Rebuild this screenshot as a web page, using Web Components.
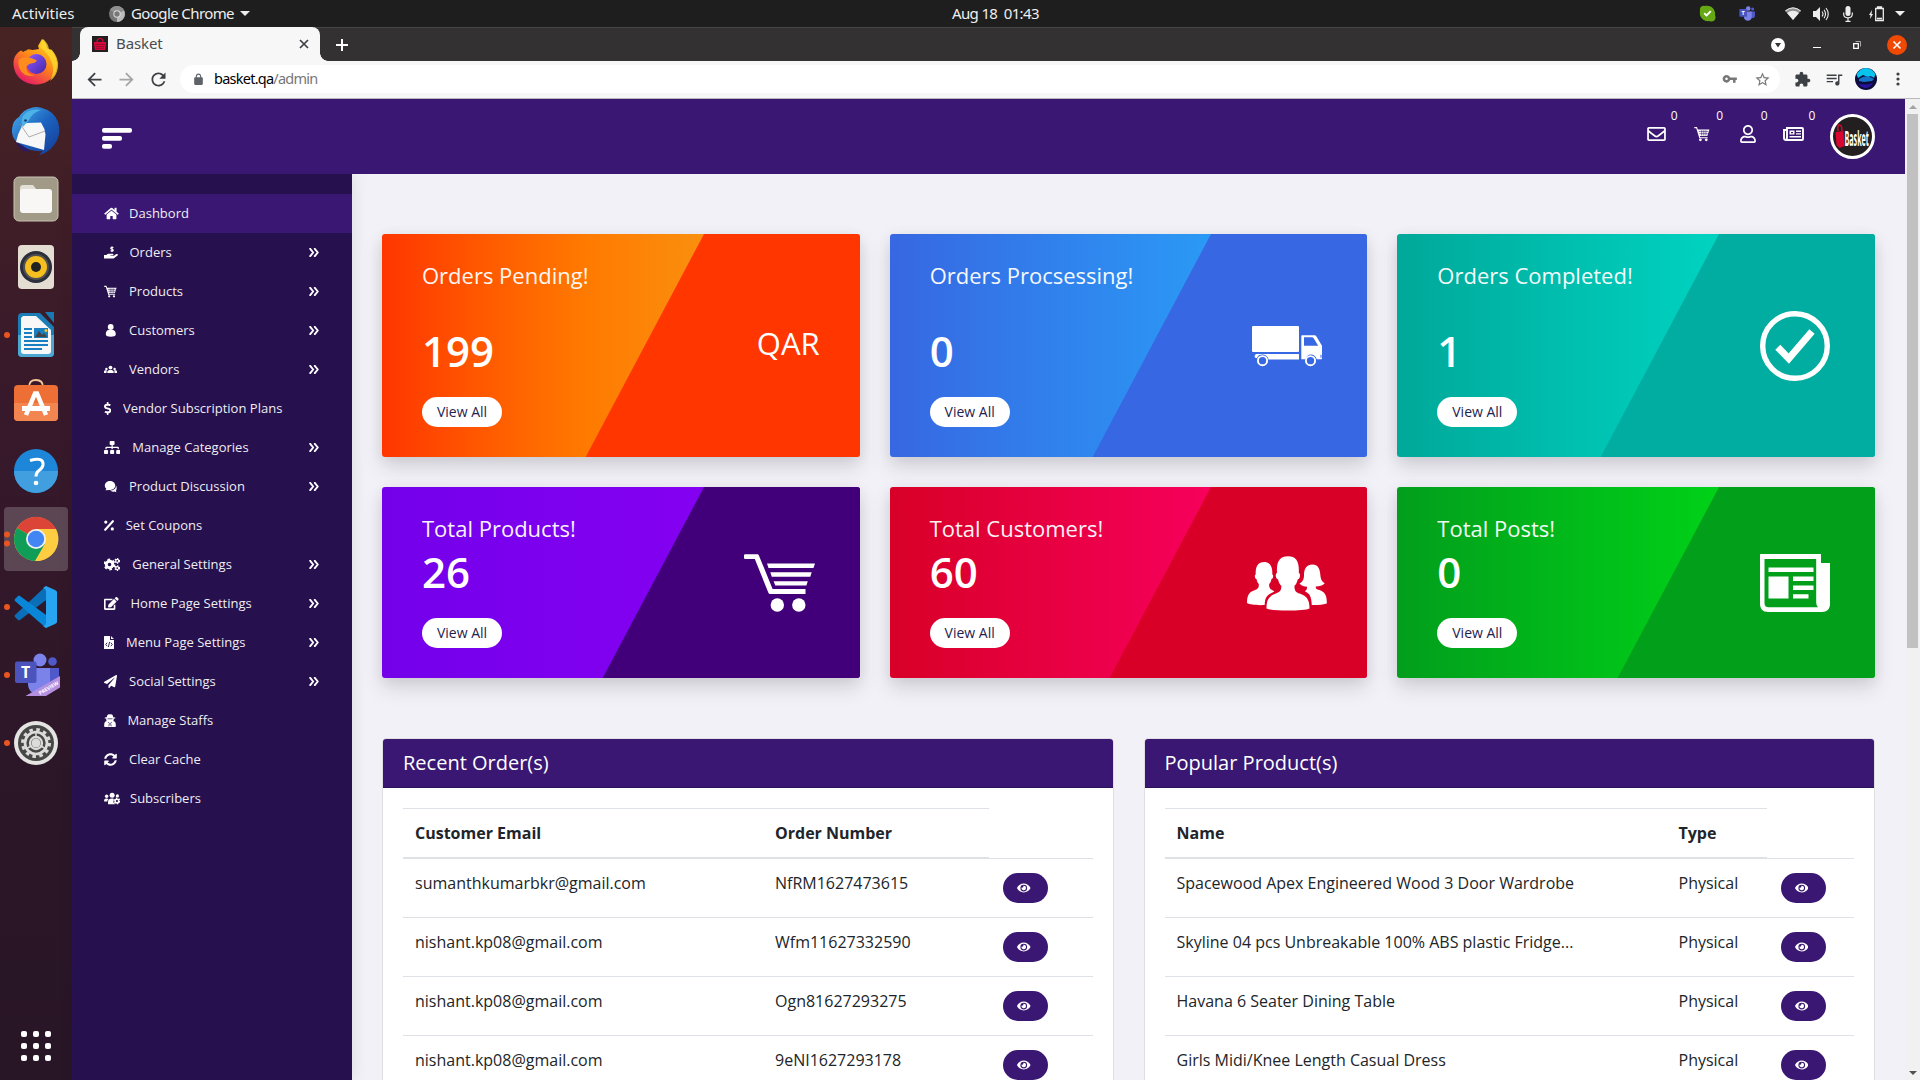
<!DOCTYPE html>
<html lang="en">
<head>
<meta charset="utf-8">
<title>Basket</title>
<style>
html,body{margin:0;height:100%;overflow:hidden}
body{font-family:"Open Sans","Noto Sans",sans-serif;background:#1e1e1e}
</style>
</head>
<body>
<desk-shell>
  <top-bar slot="top"></top-bar>
  <app-dock slot="dock"></app-dock>
  <tab-strip slot="window">Basket</tab-strip>
  <browser-toolbar slot="window" host="basket.qa" path="/admin"></browser-toolbar>
  <admin-page slot="window">
    <site-header slot="header"></site-header>
    <side-nav slot="nav">
      <nav-item icon="home" gap="25" iw="15" active>Dashbord</nav-item>
      <nav-item icon="hand" gap="25.5" iw="14" more>Orders</nav-item>
      <nav-item icon="cartSmall" gap="25" iw="13" more>Products</nav-item>
      <nav-item icon="person" gap="25" iw="13" more>Customers</nav-item>
      <nav-item icon="group" gap="25" iw="13" more>Vendors</nav-item>
      <nav-item icon="dollar" gap="19" iw="7.3">Vendor Subscription Plans</nav-item>
      <nav-item icon="sitemap" gap="28.3" iw="16.25" more>Manage Categories</nav-item>
      <nav-item icon="bubble" gap="25" iw="13" more>Product Discussion</nav-item>
      <nav-item icon="percent" gap="21.7" iw="10">Set Coupons</nav-item>
      <nav-item icon="gears" gap="28.3" iw="16.25" more>General Settings</nav-item>
      <nav-item icon="edit" gap="26.5" iw="14.6" more>Home Page Settings</nav-item>
      <nav-item icon="fileCode" gap="22" iw="10" more>Menu Page Settings</nav-item>
      <nav-item icon="plane" gap="25" iw="13" more>Social Settings</nav-item>
      <nav-item icon="spy" gap="23.4" iw="12">Manage Staffs</nav-item>
      <nav-item icon="sync" gap="25" iw="13">Clear Cache</nav-item>
      <nav-item icon="usersCog" gap="26" iw="16.25">Subscribers</nav-item>
    </side-nav>
    <stat-card slot="stats" heading="Orders Pending!" value="199" tall c="#ff3600" g="#ff3600,#ff5700 95px,#ff7a00 204px,#fa8f0e 322px"><span>QAR</span></stat-card>
    <stat-card slot="stats" heading="Orders Procsessing!" value="0" tall c="#3767e2" g="#3767e2,#2a9bf6 330px" icon="truck"></stat-card>
    <stat-card slot="stats" heading="Orders Completed!" value="1" tall c="#00ada0" g="#00a899,#00d4c2 330px" icon="check"></stat-card>
    <stat-card slot="stats" heading="Total Products!" value="26" c="#410079" g="#7400ea,#8500f2 330px" icon="cart"></stat-card>
    <stat-card slot="stats" heading="Total Customers!" value="60" c="#d90027" g="#d80027,#f8005e 330px" icon="people"></stat-card>
    <stat-card slot="stats" heading="Total Posts!" value="0" c="#029f1b" g="#029e1c,#00d318 330px" icon="news"></stat-card>
    <data-panel slot="panels" heading="Recent Order(s)" cols="360px 226px 1fr" h1="Customer Email" h2="Order Number">
      <data-row c1="sumanthkumarbkr@gmail.com" c2="NfRM1627473615"></data-row>
      <data-row c1="nishant.kp08@gmail.com" c2="Wfm11627332590"></data-row>
      <data-row c1="nishant.kp08@gmail.com" c2="Ogn81627293275"></data-row>
      <data-row c1="nishant.kp08@gmail.com" c2="9eNI1627293178"></data-row>
    </data-panel>
    <data-panel slot="panels" heading="Popular Product(s)" cols="502px 100px 1fr" h1="Name" h2="Type">
      <data-row c1="Spacewood Apex Engineered Wood 3 Door Wardrobe" c2="Physical"></data-row>
      <data-row c1="Skyline 04 pcs Unbreakable 100% ABS plastic Fridge..." c2="Physical"></data-row>
      <data-row c1="Havana 6 Seater Dining Table" c2="Physical"></data-row>
      <data-row c1="Girls Midi/Knee Length Casual Dress" c2="Physical"></data-row>
    </data-panel>
  </admin-page>
</desk-shell>
<script>
const def = (name, css, html) => customElements.define(name, class extends HTMLElement {
  connectedCallback() {
    if (this.shadowRoot) return;
    const root = this.attachShadow({ mode: 'open' });
    root.innerHTML = `<style>:host,*{box-sizing:border-box}svg{display:block;flex:none}${css}</style>` + (typeof html === 'function' ? html(this) : html);
  }
});
const svg = (w, h, vb, body, extra = '') => `<svg width="${w}" height="${h}" viewBox="${vb}" fill="currentColor" ${extra}>${body}</svg>`;
const p = d => `<path d="${d}"/>`;
const gear = (cx, cy, r, s, n, hole) => {
  const c = 2 * Math.PI * r, u = c / (n * 2);
  return `<g fill="none" stroke="currentColor"><circle cx="${cx}" cy="${cy}" r="${r}" stroke-width="${s}" stroke-dasharray="${u} ${u}"/><circle cx="${cx}" cy="${cy}" r="${(r + hole) / 2}" stroke-width="${r - hole}"/></g>`;
};

/* name: [viewBox, markup] */
const I = {
  home: ['0 0 576 512', p('M280.37 148.26L96 300.11V464a16 16 0 0 0 16 16l112.06-.29a16 16 0 0 0 15.92-16V368a16 16 0 0 1 16-16h64a16 16 0 0 1 16 16v95.64a16 16 0 0 0 16 16.05L464 480a16 16 0 0 0 16-16V300L295.67 148.26a12.19 12.19 0 0 0-15.3 0zM571.6 251.47L488 182.56V44.05a12 12 0 0 0-12-12h-56a12 12 0 0 0-12 12v72.61L318.47 43a48 48 0 0 0-61 0L4.34 251.47a12 12 0 0 0-1.6 16.9l25.5 31A12 12 0 0 0 45.15 301l235.22-193.74a12.19 12.19 0 0 1 15.3 0L530.9 301a12 12 0 0 0 16.9-1.6l25.5-31a12 12 0 0 0-1.7-16.93z')],
  hand: ['0 0 14 13', '<path d="M0 9h2.2c1-.9 2-1.200 3.200-1.200h3.200c1.200 0 1.200 1.500 0 1.500H6.500v.5h3.300l2.600-1.700c1.100-.7 2.100.5 1.200 1.300l-3.300 2.600c-.5.400-1 .500-1.600.500H0z"/><path d="M9.300 1.900C8.700.9 6.700 1 6.700 2.200c0 1.400 2.600.6 2.600 2 0 1.200-2.100 1.300-2.700.2M8 .2v5.900" fill="none" stroke="currentColor" stroke-width="1.100"/>'],
  cartSmall: ['0 0 15 15', '<path d="M.3 1h2.500l.8 2.200h10.900l-2 6.200H5.500l.4 1.200h6.900v1H5L2.100 2.200H.3z"/><circle cx="6" cy="13" r="1.300"/><circle cx="11.500" cy="13" r="1.300"/><path d="M4.500 5.100h8.900M5 7.200h8M7.200 4v5M9.200 4v5M11.200 4v5" stroke="var(--bg,#26104e)" stroke-width=".55"/>'],
  person: ['0 0 13 13', '<circle cx="6.700" cy="3" r="2.900"/><path d="M1.800 10.500c0-3 1-4.500 3-4.500h3.800c2 0 3.200 1.500 3.200 4.500 0 2.900-10 2.900-10 0z"/>'],
  group: ['0 0 13 13', '<circle cx="6.500" cy="4.600" r="1.900"/><circle cx="2.400" cy="6" r="1.200"/><circle cx="10.600" cy="6" r="1.200"/><path d="M3.300 10V8.800C3.300 6.300 9.700 6.300 9.700 8.800V10zM0 10V9c0-1.700 1.300-1.800 2.900-1.600C2.500 8 2.500 9 2.500 10zm13 0V9c0-1.700-1.300-1.800-2.900-1.600.4.600.4 1.600.4 2.600z"/>'],
  dollar: ['0 0 288 512', p('M209.2 233.4l-108-31.6C88.7 198.2 80 186.5 80 173.500c0-16.300 13.200-29.500 29.500-29.500h66.300c12.200 0 24.200 3.700 34.200 10.500 6.100 4.100 14.300 3.100 19.500-2l34.800-34c7.100-6.900 6.100-18.400-1.800-24.500C238 74.800 207.400 64.100 176 64V16c0-8.800-7.200-16-16-16h-32c-8.800 0-16 7.200-16 16v48h-2.500C45.800 64-5.400 118.700.5 183.600c4.200 46.100 39.400 83.600 83.800 96.600l102.500 30c12.500 3.700 21.200 15.300 21.200 28.300 0 16.300-13.200 29.500-29.500 29.500h-66.300C100 368 88 364.300 78 357.500c-6.100-4.100-14.300-3.100-19.500 2l-34.800 34c-7.100 6.900-6.100 18.400 1.800 24.500 24.500 19.200 55.100 29.900 86.500 30v48c0 8.800 7.200 16 16 16h32c8.800 0 16-7.200 16-16v-48.200c46.600-.9 90.300-28.600 105.700-72.700 21.500-61.600-14.600-124.800-72.500-141.700z')],
  sitemap: ['0 0 640 512', p('M128 352H32c-17.670 0-32 14.330-32 32v96c0 17.670 14.330 32 32 32h96c17.670 0 32-14.330 32-32v-96c0-17.670-14.330-32-32-32zm-24-80h192v48h48v-48h192v48h48v-57.590c0-21.170-17.230-38.410-38.410-38.410H344v-64h40c17.670 0 32-14.330 32-32V32c0-17.670-14.330-32-32-32H256c-17.670 0-32 14.330-32 32v96c0 17.670 14.330 32 32 32h40v64H94.410C73.230 224 56 241.230 56 262.410V320h48v-48zm264 80h-96c-17.670 0-32 14.330-32 32v96c0 17.670 14.330 32 32 32h96c17.670 0 32-14.330 32-32v-96c0-17.670-14.330-32-32-32zm240 0h-96c-17.670 0-32 14.330-32 32v96c0 17.670 14.330 32 32 32h96c17.670 0 32-14.330 32-32v-96c0-17.670-14.330-32-32-32z')],
  bubble: ['0 0 13 13', '<path d="M.800 5.800C.800 2.800 3.300 1 6 1S11.200 2.700 11.200 5.600c0 2.900-2.700 4.600-5.400 4.300L1.500 10.300l.8-1.600C1.300 8 .8 7 .8 5.800z"/><path d="M11.700 5c.8 3.500-1.400 5.500-5.600 5.600 1.200 1.200 3 1.300 4.200.9l2.100.8-.5-1.600c1.200-1.700 1-4.200-.2-5.700z"/>'],
  percent: ['0 0 10 12', '<circle cx="1.800" cy="2.600" r="1.600"/><circle cx="8.300" cy="9.400" r="1.600"/><path d="M8.900 1.700L1.200 10.300" stroke="currentColor" stroke-width="2.100" stroke-linecap="round"/>'],
  gears: ['0 0 16 13', gear(5.400, 6.500, 4.700, 2.400, 6, 1.800) + gear(13.100, 2.900, 2.100, 1.500, 6, .9) + gear(13.100, 10.100, 2.100, 1.500, 6, .9)],
  edit: ['0 0 576 512', p('M402.600 83.200l90.200 90.200c3.800 3.800 3.800 10 0 13.800L274.400 405.600l-92.800 10.300c-12.400 1.400-22.900-9.100-21.500-21.500l10.300-92.800L388.800 83.200c3.800-3.800 10-3.800 13.800 0zm162-22.900l-48.800-48.800c-15.200-15.200-39.900-15.200-55.200 0l-35.400 35.400c-3.800 3.800-3.800 10 0 13.800l90.200 90.200c3.800 3.800 10 3.800 13.800 0l35.400-35.400c15.200-15.300 15.200-40 0-55.200zM384 346.200V448H64V128h229.800c3.200 0 6.200-1.300 8.500-3.500l40-40c7.600-7.600 2.200-20.500-8.500-20.500H48C21.500 64 0 85.500 0 112v352c0 26.500 21.500 48 48 48h352c26.500 0 48-21.500 48-48V306.200c0-10.700-12.900-16-20.500-8.500l-40 40c-2.200 2.300-3.500 5.300-3.500 8.500z')],
  fileCode: ['0 0 10 13', '<path d="M.7 0H6v3.400c0 .3.200.6.600.6H10v8.400c0 .4-.2.600-.6.600H.7c-.5 0-.7-.2-.7-.6V.600C0 .2.200 0 .7 0zM7 0l3 3H7z"/><path d="M3.200 6.700L1.700 8.500l1.500 1.700M6.800 6.700l1.500 1.800-1.500 1.700M5.600 5.900L4.400 11" fill="none" stroke="#26104e" stroke-width=".9"/>'],
  plane: ['0 0 512 512', p('M476 3.200L12.500 270.600c-18.100 10.400-15.800 35.600 2.200 43.200L121 358.400l287.300-253.200c5.500-4.900 13.300 2.600 8.600 8.300L176 407v80.500c0 23.600 28.500 32.900 42.500 15.800L282 426l124.600 52.200c14.200 6 30.400-2.900 33-18.200l72-432C515 7.800 493.300-6.800 476 3.200z')],
  spy: ['0 0 12 13', '<path d="M3.300 1.200C4 .100 5 0 6 .5 7 0 8 .1 8.700 1.200l.6 2 1.900.4v.8H9.700c.1 1.400 0 2-.4 2.500 2 .6 2.500 1.900 2.500 3.800V12c0 .6-.4 1-1 1H1.200c-.6 0-1-.4-1-1v-1.300c0-1.900.5-3.200 2.500-3.800-.4-.5-.5-1.100-.4-2.500H.8v-.8l1.900-.4z"/><path d="M3.500 4.800h5M4.100 7.900l1.300 1.500-.6 2.900M7.900 7.900L6.600 9.400l.6 2.900" fill="none" stroke="#26104e" stroke-width=".7"/>'],
  sync: ['0 0 512 512', p('M370.720 133.280C339.458 104.008 298.888 87.962 255.848 88c-77.458.068-144.328 53.178-162.791 126.850-1.344 5.363-6.122 9.150-11.651 9.150H24.103c-7.498 0-13.194-6.807-11.807-14.176C33.933 94.924 134.813 8 256 8c66.448 0 126.791 26.136 171.315 68.685L463.030 40.970C478.149 25.851 504 36.559 504 57.941V192c0 13.255-10.745 24-24 24H345.941c-21.382 0-32.090-25.851-16.971-40.971l41.750-41.749zM32 296h134.059c21.382 0 32.090 25.851 16.971 40.971l-41.750 41.750c31.262 29.273 71.835 45.319 114.876 45.280 77.418-.070 144.315-53.144 162.787-126.849 1.344-5.363 6.122-9.150 11.651-9.150h57.304c7.498 0 13.194 6.807 11.807 14.176C478.067 417.076 377.187 504 256 504c-66.448 0-126.791-26.136-171.315-68.685L48.970 471.030C33.851 486.149 8 475.441 8 454.059V320c0-13.255 10.745-24 24-24z')],
  usersCog: ['0 0 16 13', '<circle cx="2.500" cy="4.300" r="1.700"/><circle cx="8" cy="3.200" r="2.500"/><circle cx="13.300" cy="3.900" r="1.600"/><path d="M0 9.500V8.300C0 6.300 3.200 6 4.500 7 3.500 8 3.300 8.600 3.200 9.500zM3.900 12.300V9.800c0-3.200 3.500-3.800 5.700-3l-.3 3.700 1.700 1.800z"/>' + gear(12.800, 9, 2.600, 1.700, 6, 1.100)],
  angle: ['0 0 10 9', '<path d="M1.200.8L4.200 4.500 1.200 8.200M5.800.8l3 3.700-3 3.700" fill="none" stroke="currentColor" stroke-width="1.900" stroke-linecap="round" stroke-linejoin="round"/>'],
  envelope: ['0 64 512 384', p('M464 64H48C21.490 64 0 85.490 0 112v288c0 26.510 21.490 48 48 48h416c26.510 0 48-21.490 48-48V112c0-26.510-21.490-48-48-48zm0 48v40.805c-22.422 18.259-58.168 46.651-134.587 106.490-16.841 13.247-50.201 45.072-73.413 44.701-23.208.375-56.579-31.459-73.413-44.701C106.180 199.465 70.425 171.067 48 152.805V112h416zM48 400V214.398c22.914 18.251 55.409 43.862 104.938 82.646 21.857 17.205 60.134 55.186 103.062 54.955 42.717.231 80.509-37.199 103.053-54.947 49.528-38.783 82.032-64.401 104.947-82.653V400H48z')],
  user: ['0 0 448 512', p('M313.600 304c-28.700 0-42.500 16-89.600 16-47.100 0-60.800-16-89.600-16C60.200 304 0 364.200 0 438.400V464c0 26.500 21.500 48 48 48h352c26.500 0 48-21.500 48-48v-25.600c0-74.200-60.200-134.400-134.400-134.400zM400 464H48v-25.600c0-47.600 38.800-86.400 86.400-86.400 14.600 0 38.300 16 89.600 16 51.700 0 74.900-16 89.600-16 47.600 0 86.400 38.800 86.400 86.400V464zM224 288c79.500 0 144-64.500 144-144S303.500 0 224 0 80 64.500 80 144s64.500 144 144 144zm0-240c52.900 0 96 43.100 96 96s-43.100 96-96 96-96-43.100-96-96 43.100-96 96-96z')],
  newsSmall: ['0 0 21 14', '<path d="M4 1h15c.7 0 1 .4 1 1v10c0 .7-.4 1-1 1H3c-1.300 0-2-.6-2-2V3h3zM4 3v8c0 1-.4 1.700-1.200 2" fill="none" stroke="currentColor" stroke-width="1.900"/><path fill-rule="evenodd" d="M6.500 3.500h5v4h-5zM8 5h2v1.200H8zM13 3.500h5V5h-5zM13 6.200h5v1.400h-5zM6.500 9H18v1.500H6.500z"/>'],
  eye: ['0 0 576 512', p('M572.520 241.400C518.290 135.590 410.930 64 288 64S57.680 135.640 3.480 241.410a32.350 32.350 0 0 0 0 29.190C57.710 376.410 165.070 448 288 448s230.320-71.640 284.520-177.410a32.350 32.350 0 0 0 0-29.190zM288 400a144 144 0 1 1 144-144 143.930 143.930 0 0 1-144 144zm0-240a95.310 95.310 0 0 0-25.310 3.790 47.850 47.850 0 0 1-66.900 66.900A95.780 95.780 0 1 0 288 160z')],
  truck: ['0 0 80 80', '<rect x="5" y="20" width="47" height="26" rx="1"/><path d="M10 48h42v5.500H21.500c-1-6-10-6.500-11.500-1.500-1.800.500-2.500-1-2.300-2.300C7.900 48.500 9 48 10 48z"/><path fill-rule="evenodd" d="M55 29.200h12.200c1 0 1.600.3 2.100 1.100l5.700 9.500v12.400c0 .8-.4 1-1 1h-4.200c-1.700-6.500-10-6.300-11.400 0H54.300V30c0-.6.200-.8.700-.8zM57 31.200v8.600h14.200L66.500 32c-.4-.6-.7-.8-1.300-.8zM73.500 48.700v3h1v-3z"/><g fill="none" stroke="currentColor" stroke-width="1.900"><circle cx="15.500" cy="54.700" r="4.600"/><circle cx="63.500" cy="54.700" r="4.600"/></g>'],
  check: ['0 0 80 80', '<circle cx="40" cy="40" r="32.300" fill="none" stroke="currentColor" stroke-width="5.400"/><path d="M22.800 41.200l11 11.400 23.200-27.100" fill="none" stroke="currentColor" stroke-width="7"/>'],
  cart: ['0 0 80 80', '<path d="M5.500 11.200H17c1 0 1.600.4 1.900 1.300L32.600 45.900h32.900V51H30.300c-1 0-1.500-.4-1.900-1.300L14.800 16.100H5.500c-1 0-1.500-.5-1.500-1.300v-2.300c0-.8.500-1.300 1.500-1.300z"/><path d="M27 20.500h48l-1.500 4.600H28.500zM30.300 29.200h41.400l-1.400 4.500H31.800zM33.600 38.200h34.200L66.400 42.500H35.300z"/><circle cx="37.300" cy="62" r="6.700"/><circle cx="58.800" cy="62" r="6.700"/>'],
  people: ['0 0 80 80', '<path d="M17 19c-5.700 0-8.700 4-8.300 12.500-1.400.3-1.100 4.200.8 4.500.4 2.200 1.200 3.900 2.300 5 .2 4-1.200 5-4.300 6.200C2.500 49 0 51.500 0 60c3 1.700 10.500 2.500 17.700 2 .2-7.500 2-10 8.300-12.800l1.400-.9c-4.500-2-5.500-3.500-5.200-7.300 1.200-1.100 1.900-2.800 2.300-5 1.900-.3 2.200-4.200.8-4.500C25.700 23 22.700 19 17 19zM65.500 21.500C59.500 21.500 57 26 57 32c0 4-1 6.500-4.500 8.600 1.800 2.300 5 3.200 7.500 3.200.2 2-.6 3.300-2.200 4.500 5 2.400 6.500 5 7 13.700 5.700.2 10.700-.3 15-1.500.2-8-1.800-11.500-7.500-13.400-3-1-3.700-1.500-3.500-3.500 3.500 0 7-1.200 9-3.300-3.300-1.700-4.200-4.800-4.500-8.800-.4-6-2.500-10-7.800-10z"/><path d="M41 13.200c-8 0-11.800 5-11 16.800-2 .3-1.500 6 1 6.300.7 3.200 1.900 5.200 3.300 6.500.2 4.700-1.300 6.200-5.500 7.800-6.500 2.500-9.300 5.300-9.300 14.900 4.500 2.700 38 2.700 43 0 0-9.600-3.300-12.400-9.800-14.900-4-1.600-5.400-3.100-5.200-7.800 1.500-1.300 2.600-3.300 3.300-6.500 2.500-.3 3-6 1-6.300.7-11.800-2.800-16.800-10.800-16.800z"/>'],
  news: ['0 0 80 80', '<path fill-rule="evenodd" d="M5.500 11H66v9h9V61c0 5-3 8-8 8H13.500c-6 0-8.500-3.500-8.500-8.500v-49zM9.500 16v44c0 3 1.500 4.200 4.200 4.200H63c-1.300-1.500-1.800-3-1.800-5.500V16z"/><path d="M13.500 24.500h45v4.500h-45zM13.500 33.500h20v22h-20zM38 33.500h20.500V38H38zM38 42.500h20.500V47H38zM38 51.300h15.500v4.300H38z"/>'],
  back: ['0 0 24 24', p('M20 11H7.830l5.590-5.590L12 4l-8 8 8 8 1.410-1.410L7.830 13H20v-2z')],
  fwd: ['0 0 24 24', p('M12 4l-1.410 1.410L16.170 11H4v2h12.170l-5.580 5.590L12 20l8-8z')],
  reload: ['0 0 24 24', p('M17.650 6.350C16.200 4.900 14.210 4 12 4c-4.420 0-7.990 3.580-7.990 8s3.570 8 7.990 8c3.730 0 6.840-2.550 7.730-6h-2.080c-.82 2.330-3.040 4-5.650 4-3.310 0-6-2.690-6-6s2.690-6 6-6c1.660 0 3.140.690 4.220 1.780L13 11h7V4l-2.350 2.350z')],
  lock: ['0 0 24 24', p('M18 8h-1V6c0-2.760-2.240-5-5-5S7 3.240 7 6v2H6c-1.100 0-2 .900-2 2v10c0 1.100.900 2 2 2h12c1.100 0 2-.900 2-2V10c0-1.100-.900-2-2-2zM9 6c0-1.660 1.340-3 3-3s3 1.340 3 3v2H9V6z')],
  key: ['0 0 24 24', p('M12.650 10C11.830 7.670 9.610 6 7 6c-3.310 0-6 2.690-6 6s2.690 6 6 6c2.610 0 4.830-1.670 5.650-4H17v4h4v-4h2v-4H12.650zM7 14c-1.100 0-2-.900-2-2s.900-2 2-2 2 .900 2 2-.900 2-2 2z')],
  star: ['0 0 24 24', p('M22 9.240l-7.190-.620L12 2 9.190 8.630 2 9.240l5.460 4.730L5.820 21 12 17.270 18.180 21l-1.630-7.030L22 9.240zM12 15.400l-3.760 2.270 1-4.280-3.320-2.880 4.380-.380L12 6.100l1.710 4.040 4.380.380-3.320 2.880 1 4.280L12 15.400z')],
  ext: ['0 0 24 24', p('M20.500 11H19V7c0-1.100-.900-2-2-2h-4V3.500C13 2.120 11.880 1 10.500 1S8 2.120 8 3.500V5H4c-1.100 0-1.990.900-1.990 2v3.800H3.500c1.490 0 2.700 1.210 2.700 2.700s-1.210 2.700-2.700 2.700H2V20c0 1.100.900 2 2 2h3.800v-1.500c0-1.490 1.210-2.700 2.700-2.700 1.490 0 2.700 1.210 2.700 2.700V22H17c1.100 0 2-.900 2-2v-4h1.500c1.380 0 2.500-1.120 2.500-2.500S21.880 11 20.500 11z')],
  music: ['0 0 24 24', p('M15 5H1v2h14V5zm0 4.500H1v2h14v-2zM1 14h9v2H1zM17 5v9.680c-.310-.110-.650-.180-1-.180-1.660 0-3 1.340-3 3s1.340 3 3 3 3-1.340 3-3V7h4V5h-6z')]
};
const ic = (n, w, h = w) => svg(w, h, I[n][0], I[n][1]);

def('desk-shell', `
:host{display:flex;flex-direction:column;width:1920px;height:1080px;overflow:hidden}
.main{display:flex;flex:1;min-height:0}
.win{flex:1;min-width:0;display:flex;flex-direction:column}`,
`<slot name="top"></slot><div class="main"><slot name="dock"></slot><div class="win"><slot name="window"></slot></div></div>`);

const TEAMS = '<circle cx="26" cy="8" r="6.500" fill="#7b83eb"/><circle cx="38.500" cy="9.500" r="4.300" fill="#5059c9"/><path d="M32 16h13v13c0 8-13 8-13 0z" fill="#5059c9"/><path d="M14 16h22v16c0 14-22 14-22 0z" fill="#7b83eb"/><rect x="1" y="9.500" width="21.500" height="21.500" rx="2" fill="#4b53bc"/><text x="11.700" y="26" text-anchor="middle" font-family="Open Sans" font-weight="700" font-size="16" fill="#fff">T</text>';

def('top-bar', `
:host{display:flex;align-items:center;height:27px;flex:none;background:#1e1e1e;color:#eee;font:15px/27px "Noto Sans",sans-serif;padding:0 10px 0 12px}
.l{flex:0 0 940px;display:flex;align-items:center;white-space:pre}
.a{width:97px}.g{margin:0 6px 0 6px;letter-spacing:-.6px}
.r{flex:1;display:flex;justify-content:flex-end;align-items:center}
.t{white-space:pre;letter-spacing:-.65px}`,
`<div class="l"><span class="a">Activities</span>
${svg(16, 16, '0 0 48 48', '<circle cx="24" cy="24" r="24" fill="#777"/><path d="M24 24L45 13A24 24 0 0 1 24 48z" fill="#bbb"/><path d="M24 24L3 12A24 24 0 0 1 45 13z" fill="#8f8f8f"/><circle cx="24" cy="24" r="11" fill="#ddd"/><circle cx="24" cy="24" r="8" fill="#777"/>')}<span class="g">Google Chrome</span>${svg(10, 5, '0 0 10 5', '<path d="M0 0h10L5 5z"/>')}</div>
<span class="t">Aug 18  01:43</span>
<div class="r">
${svg(17, 17, '0 0 18 18', '<path d="M1 4a4 4 0 0 1 5-3C12-.5 18 4 17 11c2 4-2 8-6 6C5 18 0 13 1 7z" fill="#66a814"/><path d="M5.500 8.700L8 11l4.500-4.500" fill="none" stroke="#fff" stroke-width="2"/>')}
<span style="margin-left:23px">${svg(17, 17, '0 0 48 44', TEAMS)}</span>
<span style="margin-left:29px">${svg(16, 13, '0 0 16 13', '<path d="M0 3.500Q8-2.500 16 3.500L8 13z" opacity=".55"/><path d="M2 6q6-4.500 12 0L8 13z"/><path d="M.3 4Q8-2.300 15.700 4" fill="none" stroke="currentColor"/>')}</span>
<span style="margin-left:12px">${svg(16, 14, '0 0 16 14', '<path d="M0 4h3l4-4v14L3 10H0z"/><path d="M9 4.500q2 2.500 0 5M11 2.700q3 4.300 0 8.600M13 1q4.500 6 0 12" fill="none" stroke="currentColor" stroke-width="1.100"/>')}</span>
<span style="margin-left:14px">${svg(10, 16, '0 0 10 16', '<rect x="2.500" y="0" width="5" height="10" rx="2.500"/><path d="M.7 6.500V8q0 3.800 4.300 3.800T9.300 8V6.500M5 12v3M2.500 15.300h5" fill="none" stroke="currentColor" stroke-width="1.200"/>')}</span>
<span style="margin-left:16px">${svg(15, 16, '0 0 15 16', '<path d="M3 4L0 9h1.500L1 13l3-5H2.500z"/><path d="M6.700 2.500h7.600v12H6.700zM8.500 1h4v1.500h-4zM8 12.500h5" fill="none" stroke="currentColor" stroke-width="1.300"/>')}</span>
<span style="margin-left:11px;margin-right:5px">${svg(10, 5, '0 0 10 5', '<path d="M0 0h10L5 5z"/>')}</span>
</div>`);

const DOCK = [
['', `<defs><linearGradient id="f1" x1=".8" y1="0" x2=".2" y2="1"><stop offset="0" stop-color="#ffe226"/><stop offset=".45" stop-color="#ff8a16"/><stop offset="1" stop-color="#e4106e"/></linearGradient><linearGradient id="f2" x1="0" y1="0" x2="1" y2="1"><stop offset="0" stop-color="#9059ff"/><stop offset="1" stop-color="#4326a8"/></linearGradient></defs><path d="M8 12l1.500-.5L11 13q3-2 5-2l-1-1q6 1 6 1l6-1-1-3 4-7q4 3 5 9l3 2 1-.5q5 6 6 13c1 13-9 22-21 22S1 37 1.500 23Q2 16 8 12z" fill="url(#f1)"/><path d="M28 8l3-8q5 4 6 10l3 1q7 8 6 17-1 9-8 14 5-9 2-18-3-9-12-16z" fill="#ffdc32" opacity=".75"/><circle cx="24.500" cy="25" r="10" fill="url(#f2)"/><path d="M7 20q8-4 17 1 2 1-2 3-5 0-8 4 1 8 9 8-9 3-14-4-4-6-2-12z" fill="#ff8c1c"/>`],
['', `<defs><linearGradient id="t1" x1="0" y1="0" x2="1" y2="1"><stop offset="0" stop-color="#4bb3ee"/><stop offset=".5" stop-color="#1c63c0"/><stop offset="1" stop-color="#143a93"/></linearGradient></defs><path d="M19 1q5-2 11 0 12 3 16 14 4 13-4 23-6 8-15 10l4-4q-12 1-21-5Q-1 33 0 22 1 13 7 10q4-7 12-9z" fill="url(#t1)"/><path d="M4 35q2 6 7 9l8 1-9-7z" fill="#2e1a63"/><path d="M10 19q2-3 6-3l13-.5q4 6 4.500 12L32 43 4 35q2-9 6-16z" fill="#f7f7f7"/><path d="M8 17l9 13 16-6" fill="none" stroke="#999" stroke-width=".8"/><path d="M11 9q6-8 18-6-9 3-12 10l-6 7q-3-5 0-11z" fill="#4cb2e8"/><circle cx="13.500" cy="13.500" r="1.300" fill="#143a73"/>`],
['', `<rect x="2" y="2" width="44" height="44" rx="5" fill="#a19a87" stroke="#c9c3b3"/><path d="M8 13q0-3 3-3h10l4 5v6H8z" fill="#e2dfd6"/><rect x="8" y="14" width="32" height="24" rx="3" fill="#f8f7f6"/>`],
['', `<rect x="6" y="2" width="36" height="44" rx="4" fill="#e4ded2"/><circle cx="24" cy="24" r="16" fill="#2b2f3c"/><circle cx="24" cy="24" r="13" fill="#505052"/><circle cx="24" cy="24" r="11" fill="#f5bf20"/><circle cx="24" cy="24" r="5" fill="#222"/>`],
['1', `<path d="M10 2h18l14 14v26q0 4-4 4H10q-4 0-4-4V6q0-4 4-4z" fill="#1a7db5"/><path d="M6 24h36v18q0 4-4 4H10q-4 0-4-4z" fill="#4ca8d3"/><path d="M33 1h9v11z" fill="#1779b4"/><path d="M11 5h13l15 14v21q0 3-3 3H12q-3 0-3-3V7z" fill="#f7f7f7"/><g fill="#1a7fc0"><path d="M12 17h8v2h-8zM12 21h8v2h-8zM12 25h8v2h-8zM12 29h24v2H12zM12 33h24v2H12zM12 37h18v2H12z"/><path d="M22 17h14v10H22z"/></g><path d="M23 26l4-6 3 4 2-2 3 4z" fill="#444"/><circle cx="34" cy="19.500" r="1.500" fill="#f9c623"/>`],
['', `<path d="M17 8q0-7 7-7t7 7" fill="none" stroke="#f5c79a" stroke-width="1.800"/><rect x="2" y="6" width="44" height="36" rx="4" fill="#ee6f36"/><path d="M2 24h44v14q0 4-4 4H6q-4 0-4-4z" fill="#f28550"/><g fill="none" stroke="#fff" stroke-width="4.500"><path d="M14 36L23 14.500h2L34 36"/><path d="M10 29.500h28" stroke-width="5"/></g>`],
['', `<circle cx="24" cy="24" r="22" fill="#1e86d8"/><path d="M2 24a22 22 0 0 0 44 0z" fill="#419fe0"/><path d="M18 13.500q14-4 13 4.500-.5 3-4 5.500-3 2-3 6" fill="none" stroke="#fff" stroke-width="3"/><circle cx="24" cy="36" r="2.300" fill="#fff"/>`],
['2', `<circle cx="24" cy="24" r="22" fill="#ffcd41"/><path d="M24 24L5 13a22 22 0 0 1 39 1H24z" fill="#db4437"/><path d="M5 13a22 22 0 0 0 18 33l10-17-9-5z" fill="#0f9d58"/><path d="M24 14h20a22 22 0 0 1-20.500 32L33 29z" fill="#ffcd41"/><circle cx="24" cy="24" r="10" fill="#f1f1f1"/><circle cx="24" cy="24" r="8.200" fill="#4285f4"/>`],
['1', `<path d="M34 3v14L8 37q-1 .5-2 0l-3-3q-1-1 0-2z" fill="#0a6fb8"/><path d="M3 16l3-3q1-1 2 0l26 19v13L3 18q-1-1 0-2z" fill="#0a86d8"/><path d="M34 3l9 4q2 1 2 2v30q0 1-2 2l-9 4-3-2q3 0 3-3V8q0-2-3-3z" fill="#27a5f2"/>`],
['1', `<g transform="translate(2 1)">${TEAMS}</g><path d="M13.500 45L48 25v11.500L34 45z" fill="#b58fe0"/><text transform="translate(28 44) rotate(-30)" font-family="Open Sans" font-weight="700" font-size="5" fill="#fff">PREVIEW</text>`],
['1', `<circle cx="24" cy="24" r="22" fill="#e4e4e2"/><circle cx="24" cy="24" r="18" fill="#474747"/><g fill="none" stroke="#dcdcda"><circle cx="24" cy="24" r="13.500" stroke-width="3" stroke-dasharray="3.530 3.530"/><circle cx="24" cy="24" r="11" stroke-width="2.700"/><circle cx="24" cy="24" r="6" stroke-width="2.300"/><path d="M24 12v6M34 30l-5-3M14 30l5-3" stroke-width="1.500"/></g><circle cx="24" cy="24" r="4.500" fill="#dcdcda"/>`]
];
def('app-dock', `
:host{display:flex;flex-direction:column;width:72px;flex:none;padding:2px 0 19px;background:linear-gradient(#482323,#38192b 35%,#2a1627 75%,#281526)}
.i{height:68px;flex:none;display:grid;place-items:center;position:relative}
.i.n2::before{content:"";position:absolute;inset:2px 4px;border-radius:4px;background:rgba(255,255,255,.2)}
.i svg{position:relative}
.d{position:absolute;left:4px;top:50%;transform:translateY(-50%);display:flex;flex-direction:column;gap:3px}
.d b{width:6px;height:6px;border-radius:3px;background:#e95420}
.grid{margin:auto auto 0;display:grid;grid-template-columns:repeat(3,6px);gap:6px;width:30px;justify-content:space-between}
.grid b{width:6px;height:6px;border-radius:2px;background:#fff}`,
DOCK.map(([n, s]) => `<div class="i n${n}">${svg(48, 48, '0 0 48 48', s)}<div class="d">${'<b></b>'.repeat(+n)}</div></div>`).join('') +
`<div class="grid">${'<b></b>'.repeat(9)}</div>`);

def('tab-strip', `
:host{display:flex;height:34px;flex:none;background:#333131;border-top:1px solid #474545;align-items:stretch;padding:0 13px 0 8px;font:15px/33px "Noto Sans",sans-serif;color:#494c50}
.tab{position:relative;width:240px;margin-top:-1px;background:#f7f7f7;border-radius:8px 8px 0 0;display:flex;align-items:center;padding:0 10px 0 12px}
.tab::before,.tab::after{content:"";position:absolute;bottom:0;width:8px;height:8px}
.tab::before{left:-8px;background:radial-gradient(circle at 0 0,transparent 7.500px,#f7f7f7 8px)}
.tab::after{right:-8px;background:radial-gradient(circle at 100% 0,transparent 7.500px,#f7f7f7 8px)}
.n{flex:1;margin-left:8px;margin-top:-1px;letter-spacing:-.1px}
.plus{margin:0 auto 0 16px;color:#fff;align-self:center}
.w{display:flex;align-items:center;color:#fff}`,
`<div class="tab">${svg(16, 16, '0 0 16 16', '<rect width="16" height="16" fill="#231f20"/><path d="M2 6h12v2l-1 6H3L2 8z" fill="#d9063a"/><path d="M5 6q0-3.500 3-3.500T11 6" fill="none" stroke="#d9063a" stroke-width="1.200"/><path d="M3 8.500h10M4 10.500h8M4 12.300h8" stroke="#6b1126" stroke-width=".6"/>')}<span class="n"><slot></slot></span>${svg(12, 12, '0 0 12 12', '<path d="M2 2l8 8M10 2l-8 8" stroke="#3c3f43" stroke-width="1.700"/>')}</div>
<span class="plus">${svg(12, 12, '0 0 12 12', '<path d="M6 0v12M0 6h12" stroke="#fff" stroke-width="2"/>')}</span>
<div class="w">${svg(14, 14, '0 0 14 14', '<circle cx="7" cy="7" r="7"/><path d="M4 5h6L7 9.500z" fill="#333"/>')}
${svg(8, 8, '0 0 8 8', '<path d="M0 6h8v1H0z"/>', 'style="margin-left:28px"')}
${svg(8, 8, '0 0 8 8', '<path d="M.7 2.700h4.600v4.600H.700z" fill="none" stroke="#fff" stroke-width="1.300"/><path d="M2.500 .5h5v5" fill="none" stroke="#aaa"/>', 'style="margin-left:32px"')}
${svg(20, 20, '0 0 20 20', '<circle cx="10" cy="10" r="10" fill="#f04903"/><path d="M6.500 6.500l7 7M13.500 6.500l-7 7" stroke="#fff" stroke-width="1.600"/>', 'style="margin-left:26px"')}</div>`);

def('browser-toolbar', `
:host{display:flex;height:38px;flex:none;background:#f7f7f7;border-bottom:1px solid #b9b9b9;align-items:center;padding:0 6px 1px;color:#3c3f43}
i{width:32px;display:grid;place-items:center}
.o{flex:1;height:28px;margin:0 6px;border-radius:14px;background:#fff;display:flex;align-items:center;padding:0 2px 0 12px;font:14.500px/27px "Noto Sans",sans-serif;color:#777}
.u{margin:-1px 0 0 9px;flex:1;letter-spacing:-.75px}.u b{font-weight:400;color:#000}`,
h => `<i>${ic('back', 21)}</i><i style="color:#a5a5a5">${ic('fwd', 21)}</i><i>${ic('reload', 21)}</i>
<div class="o"><span style="color:#5f6368">${ic('lock', 13)}</span><span class="u"><b>${h.getAttribute('host')}</b>${h.getAttribute('path')}</span><i>${ic('key', 15.500)}</i><i>${ic('star', 17)}</i></div>
<i>${ic('ext', 17)}</i><i>${ic('music', 17)}</i><i>${svg(22, 22, '0 0 22 22', '<circle cx="11" cy="11" r="11" fill="#0b0b3c"/><path d="M1.500 6.500Q5 0 11 0t9.500 6.500L19 10q-3-3-6-1L8 7 3 10z" fill="#08c4ec"/><path d="M4 11q6-4 11-2l4 2-2 2-8 1-5-1z" fill="#1476c9"/><path d="M3 15q5 3 15 0-3 5-8 5-5-1-7-5z" fill="#2a12a0"/>')}</i><i>${svg(4, 14, '0 0 4 14', '<circle cx="2" cy="2" r="1.600"/><circle cx="2" cy="7" r="1.600"/><circle cx="2" cy="12" r="1.600"/>')}</i>`);

def('admin-page', `
:host{display:flex;flex:1;min-height:0;background:#f2f1f8}
.page{flex:1;min-width:0;display:flex;flex-direction:column}
.row{display:flex;flex:1;min-height:0}
main{flex:1;min-width:0;padding:60px 30px 0;overflow:hidden}
.stats{display:grid;grid-template-columns:repeat(3,1fr);gap:30px}
.panels{display:grid;grid-template-columns:1fr 1fr;gap:30px;margin-top:60px}
.sb{width:15px;background:#f1f1f1;display:flex;flex-direction:column;align-items:center;padding:6px 0 5px}
.th{width:11px;height:534px;margin-top:5px;background:#c1c1c1}
.sb svg:last-child{margin-top:auto}`,
`<div class="page"><slot name="header"></slot><div class="row"><slot name="nav"></slot><main><div class="stats"><slot name="stats"></slot></div><div class="panels"><slot name="panels"></slot></div></main></div></div>
<div class="sb">${svg(8, 4, '0 0 8 4', '<path d="M0 4h8L4 0z" fill="#a3a3a3"/>')}<div class="th"></div>${svg(8, 4, '0 0 8 4', '<path d="M0 0h8L4 4z" fill="#505050"/>')}</div>`);

def('site-header', `
:host{display:flex;position:relative;height:75px;flex:none;background:#391773;color:#fff;align-items:center;padding:0 30px;--bg:#391773}
.m{margin-top:4px}
.q{display:flex;margin:-5px 14px 0 auto}
.q>div{width:45.600px;display:grid;place-items:center;height:40px;position:relative}
.q b{position:absolute;left:37px;top:-5px;font:12px/14px "Open Sans",sans-serif}
.av{width:45px;height:45px;border-radius:50%;border:3px solid #fff;background:#231f20}
.av svg{overflow:visible}`,
`<div class="m">${svg(30, 21, '0 0 30 21', '<rect width="30" height="4.700" rx="2"/><rect y="8" width="20" height="4.700" rx="2"/><rect y="16" width="10" height="4.700" rx="2"/>')}</div>
<div class="q"><div>${ic('envelope', 19, 14)}<b>0</b></div><div>${ic('cartSmall', 16)}<b>0</b></div><div>${ic('user', 16, 18)}<b style="left:36px">0</b></div><div>${ic('newsSmall', 21, 14)}<b style="left:38px">0</b></div></div>
<div class="av">${svg(39, 39, '0 0 39 39', '<path d="M2.500 15l8-1 1 15-5 2-3-3z" fill="#d9062f"/><path d="M5 14q-1-6 1.500-6T9 14" fill="none" stroke="#d9062f" stroke-width="1.500"/><text transform="translate(11.500 29) scale(.34 1)" font-family="Open Sans" font-weight="700" font-size="21" fill="#fff">Basket</text>')}</div>`);

def('side-nav', `
:host{display:flex;flex-direction:column;width:280px;flex:none;background:#26104e;padding-top:20px;box-shadow:2px 0 15px rgba(0,0,0,.08)}`, `<slot></slot>`);

def('nav-item', `
:host{display:flex;height:39px;flex:none;align-items:center;padding:0 33px 0 32px;color:#fff;font:13px/39px "Open Sans",sans-serif;white-space:nowrap}
:host([active]){background:#391773;--bg:#391773}
.i{flex:none}.t{flex:1;opacity:.93;letter-spacing:.01px}`,
h => `<span class="i" style="width:${h.getAttribute('gap')}px">${ic(h.getAttribute('icon'), h.getAttribute('iw'), 13)}</span><span class="t"><slot></slot></span>${h.hasAttribute('more') ? ic('angle', 10, 9) : ''}`);

def('stat-card', `
:host{display:flex;position:relative;height:191px;padding:29px 40px 30px;border-radius:3px;color:#fff;background:var(--g);box-shadow:0 10px 20px rgba(0,0,0,.13),0 2px 14px rgba(0,0,0,.06)}
:host([tall]){height:223px}
.cut{position:absolute;inset:0;overflow:hidden;border-radius:3px}
.cut::before{content:"";position:absolute;top:0;bottom:0;left:321.500px;right:-130px;background:var(--c);transform:skewX(-27.950deg);transform-origin:0 0}
.l{position:relative;flex:1;display:flex;flex-direction:column;align-items:flex-start}
.h{font-size:22px;line-height:24px;white-space:nowrap;opacity:.95}
.v{font-size:42px;line-height:50px;font-weight:600;margin-top:7px}
:host([tall]) .v{margin-top:39px}
.b{margin-top:21px;height:30px;width:80px;border-radius:15px;background:#fff;color:#1f224f;font-size:14px;line-height:30px;text-align:center}
.r{position:relative;align-self:center;margin-top:1px}
::slotted(span){font-size:31px;line-height:36px;display:block;margin-top:-5px}`,
h => {
  h.style.setProperty('--c', h.getAttribute('c'));
  h.style.setProperty('--g', `linear-gradient(90deg,${h.getAttribute('g')})`);
  const i = h.getAttribute('icon');
  return `<div class="cut"></div><div class="l"><div class="h">${h.getAttribute('heading')}</div><div class="v">${h.getAttribute('value')}</div><div class="b">View All</div></div><div class="r">${i ? ic(i, 80) : ''}<slot></slot></div>`;
});

def('data-panel', `
:host{display:block;height:420px;border:1px solid #dfdfe2;border-radius:4px;background:#fff;color:#212529}
.t{height:49px;background:#391773;border-bottom:1px solid #2c125a;border-radius:3px 3px 0 0;color:#fff;font-size:20px;line-height:47px;padding-left:20px}
.b{padding:20px 20px 0}
.h{display:grid;grid-template-columns:var(--cols);font-weight:700;font-size:16px;line-height:48px}
.h span{border-top:1px solid #dee2e6;border-bottom:2px solid #dee2e6;padding-left:12px}`,
h => {
  h.style.setProperty('--cols', h.getAttribute('cols'));
  return `<div class="t">${h.getAttribute('heading')}</div><div class="b"><div class="h"><span>${h.getAttribute('h1')}</span><span>${h.getAttribute('h2')}</span></div><slot></slot></div>`;
});

def('data-row', `
:host{display:grid;grid-template-columns:var(--cols);height:59px;border-top:1px solid #dee2e6;font-size:16px;line-height:24px;white-space:nowrap}
:host(:first-child){margin-top:-1px}
span{padding:12px 0 0 12px}
.e{margin:14px 0 0 14px;width:45px;height:30px;border-radius:15px;background:#391773;color:#fff;display:flex;align-items:center;padding-left:14px}`,
h => `<span>${h.getAttribute('c1')}</span><span>${h.getAttribute('c2')}</span><div class="e">${ic('eye', 13.5, 12)}</div>`);
</script>
</body>
</html>
